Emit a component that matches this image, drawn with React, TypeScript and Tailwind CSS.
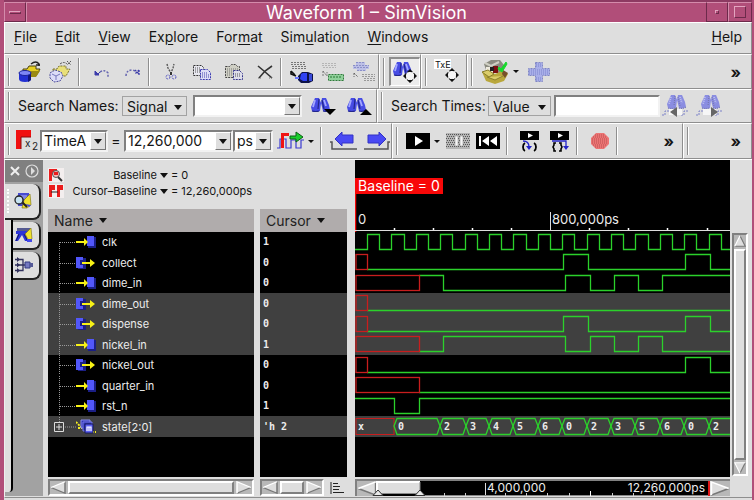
import type { ReactNode } from 'react';
import clsx from 'clsx';

type IconProps = { className?: string };

const MENUS: [string, string, string][] = [
  ['', 'F', 'ile'],
  ['', 'E', 'dit'],
  ['', 'V', 'iew'],
  ['Ex', 'p', 'lore'],
  ['For', 'm', 'at'],
  ['Sim', 'u', 'lation'],
  ['', 'W', 'indows'],
];

type Signal = {
  name: string;
  value: string;
  dir: 'in' | 'out' | 'bus';
  selected?: boolean;
  // x position up to which the value is unknown
  unknown?: number;
  start: 0 | 1;
  edges: number[];
};

const CLOCK_EDGES = Array.from({ length: 30 }, (_, i) => Math.round(12 + i * 12.2));
const STATE_EDGES = [39, 85, 111, 134, 158, 183, 207, 232, 256, 280, 305, 329, 354, 380];
const STATE_VALUES = ['0', '2', '3', '4', '5', '6', '0', '2', '3', '5', '6', '0', '2'];

const SIGNALS: Signal[] = [
  { name: 'clk', value: '1', dir: 'in', start: 0, edges: CLOCK_EDGES },
  { name: 'collect', value: '0', dir: 'out', unknown: 12, start: 0, edges: [208, 233, 330, 355] },
  { name: 'dime_in', value: '0', dir: 'in', unknown: 64, start: 1, edges: [88, 210, 235, 259, 283, 307] },
  { name: 'dime_out', value: '0', dir: 'out', selected: true, unknown: 12, start: 0, edges: [] },
  { name: 'dispense', value: '0', dir: 'out', selected: true, unknown: 12, start: 0, edges: [208, 233, 330, 355] },
  { name: 'nickel_in', value: '1', dir: 'in', selected: true, unknown: 64, start: 0, edges: [88, 210, 235, 259, 283, 307] },
  { name: 'nickel_out', value: '0', dir: 'out', unknown: 12, start: 0, edges: [330, 355] },
  { name: 'quarter_in', value: '0', dir: 'in', unknown: 64, start: 0, edges: [] },
  { name: 'rst_n', value: '1', dir: 'in', start: 1, edges: [39, 64] },
  { name: 'state[2:0]', value: "'h 2", dir: 'bus', selected: true, start: 0, edges: [] },
];

const Caret = ({ className }: IconProps) => (
  <svg viewBox="0 0 8 5" className={clsx('h-[5px] w-2 shrink-0', className)} aria-hidden="true">
    <path d="M0 0h8L4 5z" fill="#111" />
  </svg>
);

const SmallCaret = () => (
  <svg viewBox="0 0 6 3" className="h-[3px] w-1.5 shrink-0" aria-hidden="true">
    <path d="M0 0h6L3 3z" fill="#111" />
  </svg>
);

const DatabaseIcon = () => (
  <svg viewBox="0 0 24 24" className="size-6">
    <path d="M5 9h4l2-3h7v3h4l-4 7H5z" fill="#e6cf22" stroke="#4a4310" />
    <path d="M8 11h14l-4 6h-5z" fill="#9a8a12" />
    <path d="M13 4q5-4 8 0v2m-3-1h4" fill="none" stroke="#222" strokeWidth="1.4" />
    <path d="M1 13v6q0 3 6 3t6-3v-6z" fill="#2330d2" />
    <path d="M10 13h3v7l-3 2z" fill="#10157a" />
    <ellipse cx="7" cy="13" rx="6" ry="2.5" fill="#7d86f5" stroke="#1b229c" />
  </svg>
);

const ReloadDatabaseIcon = () => (
  <svg viewBox="0 0 24 24" className="size-6">
    <path d="M5 9h4l2-3h7v3h4l-4 7H5z" fill="#e9e07a" stroke="#7a7330" strokeDasharray="2 1" />
    <path d="M12 4q4-3 7 0m0-3l4 4m0-4l-4 4" fill="none" stroke="#555" strokeDasharray="2 1" />
    <path d="M2 13l5-3 6 2 2 4-3 5-6 1-4-4z" fill="#dcdcf8" stroke="#4a4a9a" strokeDasharray="2 1" />
    <path d="M4 14l4 2 4-2m-4 2v4" fill="none" stroke="#7777bb" />
  </svg>
);

const UndoIcon = () => (
  <svg viewBox="0 0 18 18" className="size-[18px]">
    <path d="M3 8v4h4zM6 11l2-2" fill="#3c3caa" stroke="#3c3caa" />
    <path d="M8 9q5-3 8 1v4" fill="none" stroke="#6666b0" strokeWidth="1.5" strokeDasharray="2 1.5" />
  </svg>
);

const RedoIcon = () => (
  <svg viewBox="0 0 18 18" className="size-[18px]">
    <path d="M2 13q0-6 7-6l2 1" fill="none" stroke="#6666b0" strokeWidth="1.5" strokeDasharray="2 1.5" />
    <path d="M11 7l4 4m0-4l-4 4m4-4v5" fill="none" stroke="#3c3caa" strokeWidth="1.3" strokeDasharray="2 1" />
  </svg>
);

const CutIcon = () => (
  <svg viewBox="0 0 18 18" className="size-[18px]">
    <path d="M5 1l1 4 3 5 2-5 1-4" fill="none" stroke="#555" strokeWidth="1.4" strokeDasharray="2 1" />
    <path d="M9 9v3" stroke="#333" strokeWidth="2" />
    <circle cx="6" cy="14" r="2" fill="none" stroke="#5454c0" strokeDasharray="2 1" />
    <circle cx="12" cy="14" r="2" fill="none" stroke="#5454c0" strokeDasharray="2 1" />
  </svg>
);

const CopyIcon = () => (
  <svg viewBox="0 0 20 18" className="h-[18px] w-5">
    <path d="M1.500 2.500h8l2 2v8h-10z" fill="#e8e8f0" stroke="#333" strokeDasharray="2 1" />
    <path d="M3 5h6M3 7h6M3 9h5" stroke="#555" strokeDasharray="1 1" />
    <path d="M8.500 6.500h7l3 3v7h-10z" fill="#dedef6" stroke="#3a3ab0" strokeDasharray="2 1" />
    <path d="M10 10h5M10 12h7M10 14h7" stroke="#4444aa" strokeDasharray="1 1" />
  </svg>
);

const PasteIcon = () => (
  <svg viewBox="0 0 20 18" className="h-[18px] w-5">
    <path d="M1.500 3.500h4l2-2h4l2 2h2v11h-14z" fill="#cfcfc4" stroke="#444" strokeDasharray="2 1" />
    <path d="M3 6h12M3 8h5M3 10h5M3 12h5" stroke="#777" strokeDasharray="1 1" />
    <path d="M9.500 7.500h6l3 3v6h-9z" fill="#dedeea" stroke="#33338a" strokeDasharray="2 1" />
    <path d="M11 11h5M11 13h6" stroke="#555" strokeDasharray="1 1" />
  </svg>
);

const DeleteIcon = () => (
  <svg viewBox="0 0 18 18" className="size-[18px]">
    <path d="M2 3l6 5 8 7M16 3L9 8l-6 7" fill="none" stroke="#333" strokeWidth="1.6" />
    <path d="M2 15h3M13 15h4" stroke="#777" strokeDasharray="1 1" />
  </svg>
);

const SendNetIcon = () => (
  <svg viewBox="0 0 24 24" className="size-6">
    <path d="M1 2.500h15M1 4.500h15M2 6.500h14M2 8.500h14" stroke="#777" strokeDasharray="2 1" />
    <path d="M1 11l4 4M1 11v3l5 2" stroke="#111" strokeWidth="1.600" fill="none" />
    <path d="M8 16l4-4h6l5 2v7l-4 2h-8l-3-3z" fill="#0c1248" />
    <path d="M11 14l2-1h4v8h-4l-3-2z" fill="#2f42f2" />
    <path d="M19 14h3v7h-3z" fill="#3a4ad8" />
    <path d="M5 18h4" stroke="#6a77ff" strokeWidth="2" />
  </svg>
);

const SendGreenIcon = () => (
  <svg viewBox="0 0 24 24" className="size-6">
    <path d="M1 3.500h14M1 5.500h14M2 7.500h13" stroke="#b5b5b5" strokeDasharray="2 1" />
    <path d="M2 11v5M2 11l4 5v-4" stroke="#777" fill="none" strokeDasharray="2 1" />
    <rect x="7.500" y="14.500" width="15" height="6" fill="#8fd09a" stroke="#2f7b3b" strokeDasharray="2 1" />
    <path d="M10 16v3m3-3v3m3-3v3m3-3v3" stroke="#277733" strokeDasharray="2 1" />
  </svg>
);

const SendGridIcon = () => (
  <svg viewBox="0 0 24 24" className="size-6">
    <path d="M4 2h9v3h4v4h-3v2H5V9H1V5h3z" fill="#bcbfe6" />
    <path d="M4 2.500h9M1 5.500h16M2 7.500h14M5 10.500h8" stroke="#8a8fc8" strokeDasharray="2 1" />
    <path d="M2 13v4M2 13l4 4" stroke="#666" fill="none" strokeDasharray="2 1" />
    <path d="M10 14.500h13M10 16.500h13M12 18.500h11M12 20.500h11" stroke="#999" strokeDasharray="2 1" />
  </svg>
);

const Lenses = ({ pale }: { pale?: boolean }) => (
  <g opacity={pale ? 0.55 : 1}>
    <path d="M5 0h4l2 5-1 8q-5 2-8 0l-1-4z" fill="#474ce4" />
    <path d="M12 0h4l3 7 1 5q-4 3-7 1l-2-8z" fill="#474ce4" />
    <path d="M5 2l-2 7M14 2l2 6" stroke="#a4a8ff" strokeWidth="1.800" strokeDasharray={pale ? '1 1' : undefined} />
    <path d="M9 1l-1 10M12 2l2 9M2 13q4 1 7 0M13 13q4 1 7-1" fill="none" stroke="#23278c" strokeWidth="1.200" strokeDasharray={pale ? '1 1' : undefined} />
  </g>
);

const MoveArrows = () => (
  <g>
    <circle cx="7" cy="7" r="4.500" fill="#f6f6f6" stroke="#333" strokeDasharray="1.500 1.500" />
    <path d="M7 0l3 3H4zM7 14l3-3H4zM0 7l3-3v6zM14 7l-3-3v6z" fill="#111" />
  </g>
);

const FindMoveIcon = () => (
  <svg viewBox="0 0 28 26" className="h-[26px] w-7">
    <g transform="translate(1 3)"><Lenses /></g>
    <g transform="translate(12 10)"><MoveArrows /></g>
  </svg>
);

const TextMoveIcon = () => (
  <svg viewBox="0 0 28 26" className="h-[26px] w-7">
    <rect x="1" width="17" height="10" fill="#fff" />
    <text x="2" y="9" fontSize="9" fill="#111">TxE</text>
    <g transform="translate(12 9)"><MoveArrows /></g>
  </svg>
);

const BoxIcon = () => (
  <svg viewBox="0 0 28 26" className="h-[26px] w-7">
    <path d="M3 5l7-4h9l4 5-3 8H6z" fill="#8b8b80" />
    <path d="M4 4l6 3 8-4" stroke="#d0d0c4" strokeWidth="2" fill="none" />
    <path d="M5 8h7v6H5z" fill="#eeeade" />
    <path d="M12 7h5v7h-5z" fill="#7d1010" />
    <path d="M9 8h4v4H9z" fill="#222" />
    <path d="M1 13l7-1 6 3 7-3 6 3-4 7-9 3-9-3z" fill="#b9a73c" />
    <path d="M1 13l6-2 6 4-5 3zM6 18l8 3 8-4" fill="#dbcd6a" stroke="#8a7e2c" />
    <path d="M22 11l5 3-3 5-3-4z" fill="#76502a" />
    <path d="M18 8l2 2 5-7 1 2-5 8-4-3z" fill="#17d82c" stroke="#17d82c" />
  </svg>
);

const PlusIcon = () => (
  <svg viewBox="0 0 24 22" className="h-[22px] w-6">
    <path d="M8.500 1.500h7v6h7v7h-7v6h-7v-6h-7v-7h7z" fill="#a9afe9" stroke="#8087c4" strokeDasharray="2 1" />
    <path d="M2 9h20M2 11h20M2 13h20M9 3h6M9 5h6M9 17h6M9 19h6" stroke="#7d84cc" strokeDasharray="1 1" />
  </svg>
);

const FindIcon = ({ up }: { up?: boolean }) => (
  <svg viewBox="0 0 28 20" className="h-5 w-7">
    <g transform="translate(0 2)"><Lenses /></g>
    {up ? <path d="M14 19h12l-6-6z" fill="#000" /> : <path d="M14 13h12l-6 6z" fill="#000" />}
  </svg>
);

const FindTimeIcon = ({ back }: { back?: boolean }) => (
  <svg viewBox="0 0 28 24" className="h-6 w-7">
    <g transform="translate(4 1)"><Lenses pale /></g>
    <path d="M0 21h3v-4h5M19 21h3v-4h5" stroke="#7b80c8" fill="none" strokeDasharray="2 1" />
    <path d="M7 15h13v6H7z" fill="#f6f6f6" />
    {back ? <path d="M15 13v10l-7-5z" fill="#666" /> : <path d="M15 13v10l7-5z" fill="#666" />}
  </svg>
);

const CursorFlagIcon = () => (
  <svg viewBox="0 0 24 24" className="size-6">
    <path d="M0 1h15v7H5v12H0z" fill="#f01010" />
    <path d="M5 8h10M5 8v12" stroke="#8c0808" />
    <text x="9" y="18" fontSize="10" fill="#222">x</text>
    <text x="16" y="21" fontSize="10" fill="#222">2</text>
  </svg>
);

const NextEdgeIcon = () => (
  <svg viewBox="0 0 28 20" className="h-5 w-7">
    <path d="M0 17h3v-9h6v9h5v-8h5v8h5v-8h3" stroke="#3a3ad0" fill="none" strokeWidth="1.200" />
    <path d="M4 2h8v3H7v12H4z" fill="#ef1313" />
    <path d="M13 5h6V1l7 5-7 5V8h-6z" fill="#19cf2c" stroke="#0b5f14" />
  </svg>
);

const EdgeArrowIcon = ({ back }: { back?: boolean }) => (
  <svg viewBox="0 0 28 22" className="h-[22px] w-7">
    {back ? (
      <>
        <path d="M5 9l7-7v3h11v8H12v3z" fill="#4a4af4" stroke="#3232c4" />
        <path d="M0 12h2v7h25" fill="none" stroke="#555" strokeWidth="1.500" />
      </>
    ) : (
      <>
        <path d="M23 9l-7-7v3H5v8h11v3z" fill="#4a4af4" stroke="#3232c4" />
        <path d="M1 19h24v-7h2" fill="none" stroke="#555" strokeWidth="1.500" />
      </>
    )}
  </svg>
);

const PlayIcon = () => (
  <svg viewBox="0 0 24 16" className="h-4 w-6">
    <rect width="24" height="16" fill="#000" />
    <path d="M9 3l8 5-8 5z" fill="#fff" />
  </svg>
);

const PauseIcon = () => (
  <svg viewBox="0 0 24 16" className="h-4 w-6">
    <rect width="24" height="16" fill="#b5b5b5" />
    <path
      d="M0 1.500h24M0 5.500h24M0 9.500h24M0 13.500h24M1 3.500h23M1 7.500h23M1 11.500h23"
      stroke="#555"
      strokeDasharray="1 1"
    />
    <path d="M9 3h3v10H9zM14 3h3v10h-3z" fill="#f5f5f5" stroke="#888" strokeWidth=".5" />
  </svg>
);

const RewindIcon = () => (
  <svg viewBox="0 0 24 16" className="h-4 w-6">
    <rect width="24" height="16" fill="#000" />
    <path d="M3 3h2v10H3zM13 3v10L6 8zM21 3v10l-7-5z" fill="#fff" />
  </svg>
);

const StepIcon = ({ over }: { over?: boolean }) => (
  <svg viewBox="0 0 20 22" className="h-[22px] w-5">
    <rect width="19" height="9" y="1" fill="#000" />
    <path d="M8 3l5 2.500L8 8z" fill="#fff" />
    {over ? (
      <>
        <path d="M2 11h14v6" fill="none" stroke="#2424c8" strokeWidth="1.300" />
        <path d="M13 16h6l-3 4z" fill="#2424c8" />
        <path d="M6 13H4v2l-1 2 1 2v2h2M9 13h2v2l1 2-1 2v2H9" fill="none" stroke="#000" strokeWidth="1.600" />
      </>
    ) : (
      <>
        <path d="M3 11q6 0 6 6" fill="none" stroke="#2424c8" strokeWidth="1.300" />
        <path d="M6 16h6l-3 4z" fill="#2424c8" />
        <path d="M5 13q-2 1-2 4t2 4M14 13q2 1 2 4t-2 4" fill="none" stroke="#000" strokeWidth="1.800" />
      </>
    )}
  </svg>
);

const StopIcon = () => (
  <svg viewBox="0 0 20 18" className="h-[18px] w-5">
    <path d="M6 1h8l5 5v6l-5 5H6l-5-5V6z" fill="#ec7474" />
    <path d="M5 3h10M3 5h14M2 7h16M2 9h16M2 11h16M3 13h14M5 15h10" stroke="#b85050" strokeDasharray="1 1" />
  </svg>
);

const ExploreTabIcon = ({ find }: { find?: boolean }) => (
  <svg viewBox="0 0 20 18" className="h-[18px] w-5">
    {find ? (
      <>
        <path d="M3 2h13v4H3z" fill="#555a90" />
        <path d="M2 5h13v3h-3l2 7h-3L8 9 4 15H1l3-7H2z" fill="#2c34d8" />
        <path d="M5 8l-3 7M10 8l3 6" stroke="#14186c" />
        <path d="M11 8l6-6 1 11-3 2z" fill="#efe230" stroke="#756b08" strokeWidth=".6" />
        <path d="M13 13h5v3h-5z" fill="#4448e8" />
      </>
    ) : (
      <>
        <path d="M5 1h11v13H5z" fill="#474bd0" />
        <path d="M7 4h7M7 6h7" stroke="#bbbdf8" />
        <path d="M11 8l6-6 1 11-4 3h-5z" fill="#efe230" stroke="#756b08" strokeWidth=".6" />
        <path d="M12 12l4 3 2-2" fill="#4448e8" />
        <path d="M9 10l5 5" stroke="#222" strokeWidth="2" />
        <circle cx="6" cy="8" r="4" fill="#c6e3f2" stroke="#222" strokeWidth="1.300" />
      </>
    )}
  </svg>
);

const NetTabIcon = () => (
  <svg viewBox="0 0 20 18" className="h-[18px] w-5">
    <path d="M1 3.500h8v11H1M1 9h10" fill="none" stroke="#30305c" strokeWidth="1.300" />
    <path d="M3 1l3 2.500L3 6zM3 6.500L6 9l-3 2.500zM3 12l3 2.500L3 17z" fill="#30305c" />
    <path d="M11 6h5v6h-5z" fill="#7478c0" stroke="#333a80" />
    <path d="M16 7h3v4h-3z" fill="#555a98" />
  </svg>
);

const BaselineIcon = ({ zoom }: { zoom?: boolean }) => (
  <svg viewBox="0 0 16 14" className="h-3.5 w-4 shrink-0 bg-[#f3eeee]">
    {zoom ? (
      <>
        <path d="M1 1h8v5H4v7H1z" fill="#ea1c1c" />
        <circle cx="8" cy="6" r="3.500" fill="#f3b9b9" stroke="#555" />
        <path d="M6 4h4v3H6z" fill="#ea1c1c" />
        <path d="M10 9l4 4" stroke="#333" strokeWidth="2" />
      </>
    ) : (
      <>
        <path d="M1 1h6v5H4v7H1zM9 1h6v5h-3v7H9z" fill="#ea1c1c" />
        <path d="M3 8h7" stroke="#222" fill="none" />
      </>
    )}
  </svg>
);

const PortIcon = ({ dir }: { dir: Signal['dir'] }) => {
  if (dir === 'bus') {
    return (
      <svg viewBox="0 0 22 16" className="h-4 w-[22px]">
        <path d="M0 3l6 6M2 9h4M16 13h4" stroke="#f5ee20" strokeWidth="1.800" strokeDasharray="2 1" />
        <path d="M5 1h9v8H5z" fill="#3437b4" stroke="#8c90f0" />
        <path d="M7 3h9v9H7z" fill="#2a2ea8" stroke="#777bea" />
        <path d="M9 5h8v9H9z" fill="#5c60f2" stroke="#14185c" />
        <path d="M11 12V8h4v4M13 8v4" fill="none" stroke="#fff" strokeWidth="1.200" />
      </svg>
    );
  }
  if (dir === 'in') {
    return (
      <svg viewBox="0 0 22 16" className="h-4 w-[22px]">
        <path d="M12 3h8v11h-8z" fill="#1b1f86" />
        <path d="M11 2h7v10h-7z" fill="#5257fa" />
        <path d="M0 7h8V4l4 4-4 4V9H0z" fill="#f8f216" />
      </svg>
    );
  }
  return (
    <svg viewBox="0 0 22 16" className="h-4 w-[22px]">
      <path d="M2 3h8v11H2z" fill="#1b1f86" />
      <path d="M0 2h7v3H4v5h3v3H0z" fill="#5257fa" />
      <path d="M6 7h8V4l5 4-5 4V9H6z" fill="#f8f216" />
    </svg>
  );
};

const IconButton = ({ label, className, children }: { label: string; className?: string; children: ReactNode }) => (
  <button type="button" aria-label={label} className={clsx('flex shrink-0 items-center justify-center', className)}>
    {children}
  </button>
);

const Toolbar = ({ className, children }: { className?: string; children: ReactNode }) => (
  <div
    role="toolbar"
    className={clsx(
      'flex items-center border border-t-white border-r-[#8e8e8e] border-b-[#8e8e8e] border-l-white',
      className,
    )}
  >
    <span className="ml-[3px] h-7 w-0.5 shrink-0 border-l border-[#8e8e8e] bg-white" />
    {children}
  </div>
);

const Separator = ({ className }: IconProps) => (
  <span className={clsx('h-7 w-0.5 shrink-0 border-l border-[#8e8e8e] bg-white', className)} />
);

const More = ({ className }: IconProps) => (
  <button type="button" aria-label="More tools" className={clsx('text-base leading-5 font-bold', className)}>
    »
  </button>
);

const DropButton = ({ label }: { label: string }) => (
  <button
    type="button"
    aria-label={label}
    className="flex w-4 shrink-0 items-center justify-center border border-t-white border-r-[#777] border-b-[#777] border-l-white bg-[#dedede]"
  >
    <Caret />
  </button>
);

const Combo = ({ label, value, className }: { label: string; value: string; className?: string }) => (
  <div
    className={clsx(
      'flex h-[22px] shrink-0 border-2 border-t-[#808080] border-r-[#f2f2f2] border-b-[#f2f2f2] border-l-[#808080] bg-white',
      className,
    )}
  >
    <input aria-label={label} defaultValue={value} className="w-full min-w-0 bg-white pl-0.5 text-sm outline-none" />
    <DropButton label={`${label} options`} />
  </div>
);

const OptionSelect = ({ id, value, className }: { id: string; value: string; className?: string }) => (
  <div className={clsx('grid h-5 shrink-0 items-center border border-[#a2a2a2]', className)}>
    <select id={id} className="col-start-1 row-start-1 w-full appearance-none pl-1 text-sm outline-none">
      <option>{value}</option>
    </select>
    <Caret className="pointer-events-none col-start-1 row-start-1 mr-1 justify-self-end" />
  </div>
);

const TitleBar = () => (
  <header className="flex h-[22px] items-stretch border-t-2 border-[#8d3a62] bg-[#b14e79] text-white">
    <button
      type="button"
      aria-label="Window menu"
      className="flex w-[22px] items-center justify-center border border-t-[#d48bab] border-r-[#6d2a4b] border-b-[#6d2a4b] border-l-[#d48bab]"
    >
      <span className="h-[3px] w-3 border border-t-[#e3a5c0] border-r-[#6d2a4b] border-b-[#6d2a4b] border-l-[#e3a5c0]" />
    </button>
    <h1 className="flex flex-1 items-center justify-center border-t border-l border-[#d48bab] text-lg leading-5">
      Waveform 1 – SimVision
    </h1>
    <button
      type="button"
      aria-label="Minimize"
      className="flex w-[22px] items-center justify-center border border-t-[#d48bab] border-r-[#6d2a4b] border-b-[#6d2a4b] border-l-[#6d2a4b]"
    >
      <span className="size-1 border border-t-[#e3a5c0] border-r-[#6d2a4b] border-b-[#6d2a4b] border-l-[#e3a5c0]" />
    </button>
    <button
      type="button"
      aria-label="Maximize"
      className="flex w-6 items-center justify-center border border-t-[#d48bab] border-r-[#6d2a4b] border-b-[#6d2a4b] border-l-[#d48bab]"
    >
      <span className="size-3 border border-t-[#e3a5c0] border-r-[#6d2a4b] border-b-[#6d2a4b] border-l-[#e3a5c0]" />
    </button>
  </header>
);

const MenuBar = () => (
  <nav className="flex h-8 items-center gap-[18px] border border-t-white border-r-[#8e8e8e] border-b-[#8e8e8e] border-l-white px-[9px] pb-0.5 text-sm">
    {MENUS.map(([before, key, after]) => (
      <button type="button" key={key}>
        {before}
        <span className="underline underline-offset-2">{key}</span>
        {after}
      </button>
    ))}
    <button type="button" className="ml-auto">
      <span className="underline underline-offset-2">H</span>elp
    </button>
  </nav>
);

const MainTools = () => (
  <div className="flex h-[35px]">
    <Toolbar className="w-[375px] shrink-0">
      <div className="ml-2 flex gap-1.5">
        <IconButton label="Open database"><DatabaseIcon /></IconButton>
        <IconButton label="Reload database"><ReloadDatabaseIcon /></IconButton>
      </div>
      <Separator className="ml-1.5" />
      <div className="ml-3 flex gap-3.5">
        <IconButton label="Undo"><UndoIcon /></IconButton>
        <IconButton label="Redo"><RedoIcon /></IconButton>
      </div>
      <Separator className="ml-1.5" />
      <div className="ml-3 flex gap-3">
        <IconButton label="Cut"><CutIcon /></IconButton>
        <IconButton label="Copy"><CopyIcon /></IconButton>
        <IconButton label="Paste"><PasteIcon /></IconButton>
        <IconButton label="Delete"><DeleteIcon /></IconButton>
      </div>
      <Separator className="ml-1.5" />
      <div className="ml-2 flex gap-[7px]">
        <IconButton label="Send to schematic"><SendNetIcon /></IconButton>
        <IconButton label="Send to register"><SendGreenIcon /></IconButton>
        <IconButton label="Send to browser"><SendGridIcon /></IconButton>
      </div>
    </Toolbar>
    <Toolbar className="w-[42px] shrink-0">
      <IconButton
        label="Find and move"
        className="ml-1 border-t-2 border-r border-b border-l-2 border-t-[#8e8e8e] border-r-white border-b-white border-l-[#8e8e8e] bg-[#ececec]"
      >
        <FindMoveIcon />
      </IconButton>
    </Toolbar>
    <Toolbar className="w-[46px] shrink-0">
      <IconButton label="Text search" className="ml-1.5"><TextMoveIcon /></IconButton>
    </Toolbar>
    <Toolbar className="flex-1">
      <IconButton label="Packages" className="ml-2 gap-1">
        <BoxIcon />
        <SmallCaret />
      </IconButton>
      <IconButton label="Add" className="ml-2"><PlusIcon /></IconButton>
      <More className="mr-2.5 ml-auto" />
    </Toolbar>
  </div>
);

const SearchTools = () => (
  <div className="flex h-[34px]">
    <Toolbar className="w-[373px] shrink-0">
      <label htmlFor="search-names" className="ml-2 w-[104px] shrink-0 text-sm">Search Names:</label>
      <OptionSelect id="search-names" value="Signal" className="w-[65px]" />
      <Combo label="Name" value="" className="ml-1.5 w-[109px]" />
      <div className="ml-2 flex gap-2">
        <IconButton label="Find next"><FindIcon /></IconButton>
        <IconButton label="Find previous"><FindIcon up /></IconButton>
      </div>
    </Toolbar>
    <Toolbar className="flex-1">
      <label htmlFor="search-times" className="ml-2 w-[97px] shrink-0 text-sm">Search Times:</label>
      <OptionSelect id="search-times" value="Value" className="w-[63px]" />
      <input
        aria-label="Time value"
        className="ml-[3px] h-[22px] w-[106px] border-2 border-t-[#808080] border-r-[#f2f2f2] border-b-[#f2f2f2] border-l-[#808080] bg-white px-1 text-sm outline-none"
      />
      <div className="ml-0.5 flex gap-1.5">
        <IconButton label="Previous time"><FindTimeIcon back /></IconButton>
        <IconButton label="Next time"><FindTimeIcon /></IconButton>
      </div>
    </Toolbar>
  </div>
);

const TimeTools = () => (
  <div className="flex h-9">
    <Toolbar className="w-[388px] shrink-0">
      <span className="ml-1.5 shrink-0"><CursorFlagIcon /></span>
      <Combo label="Cursor" value="TimeA" className="w-[68px]" />
      <span className="w-4 shrink-0 text-center text-sm">=</span>
      <Combo label="Time" value="12,260,000" className="w-[109px]" />
      <Combo label="Unit" value="ps" className="w-10" />
      <IconButton label="Next edge type" className="ml-1 gap-[3px]">
        <NextEdgeIcon />
        <SmallCaret />
      </IconButton>
      <Separator className="ml-1.5" />
      <div className="ml-2 flex gap-[5px]">
        <IconButton label="Previous edge"><EdgeArrowIcon back /></IconButton>
        <IconButton label="Next edge"><EdgeArrowIcon /></IconButton>
      </div>
    </Toolbar>
    <Toolbar className="w-[291px] shrink-0">
      <IconButton label="Run" className="ml-2 gap-1">
        <PlayIcon />
        <SmallCaret />
      </IconButton>
      <IconButton label="Pause" className="ml-1.5"><PauseIcon /></IconButton>
      <IconButton label="Rewind" className="ml-1.5"><RewindIcon /></IconButton>
      <Separator className="ml-1.5" />
      <div className="ml-3 flex gap-2.5">
        <IconButton label="Step into"><StepIcon /></IconButton>
        <IconButton label="Step over"><StepIcon over /></IconButton>
      </div>
      <Separator className="ml-1.5" />
      <IconButton label="Stop" className="ml-3"><StopIcon /></IconButton>
      <Separator className="ml-1.5" />
      <More className="mr-2 ml-auto" />
    </Toolbar>
    <Toolbar className="flex-1">
      <More className="mr-2.5 ml-auto" />
    </Toolbar>
  </div>
);

const Dock = () => (
  <aside className="flex w-[38px] shrink-0 flex-col bg-[#a2a2a2]">
    <div className="flex h-[22px] items-center justify-between bg-[#808080] px-1">
      <button type="button" aria-label="Close panel">
        <svg viewBox="0 0 12 12" className="size-3"><path d="M2 2l8 8M10 2l-8 8" stroke="#eee" strokeWidth="2" /></svg>
      </button>
      <button type="button" aria-label="Expand panel">
        <svg viewBox="0 0 14 14" className="size-3.5">
          <circle cx="7" cy="7" r="6" fill="none" stroke="#ddd" strokeWidth="1.200" />
          <path d="M6 3v8l4-4z" fill="#ddd" />
        </svg>
      </button>
    </div>
    <div className="flex flex-1 pt-0.5 pb-1">
      <div className="w-2 shrink-0 rounded-br border-r-2 border-black bg-[#dedede]" />
      <div className="flex flex-col gap-0.5">
        <button
          type="button"
          aria-label="Design browser"
          className="-ml-2 flex h-9 w-9 items-center gap-1 rounded-r-lg border-r-2 border-b-2 border-[#222] bg-[#dedede] pl-0.5"
        >
          <span className="h-6 border-l-2 border-dotted border-white" />
          <ExploreTabIcon />
        </button>
        <button
          type="button"
          aria-label="Design search"
          className="flex h-7 w-7 items-center rounded-r-lg border-r-2 border-b-2 border-[#222] bg-[#dedede] pl-px"
        >
          <ExploreTabIcon find />
        </button>
        <button
          type="button"
          aria-label="Signal flow"
          className="flex h-7 w-7 items-center rounded-r-lg border-r-2 border-b-2 border-[#222] bg-[#dedede] pl-px"
        >
          <NetTabIcon />
        </button>
      </div>
    </div>
  </aside>
);

const ScrollBox = ({ label, dir, className }: { label: string; dir: 'left' | 'right' | 'up' | 'down'; className?: string }) => {
  const paths = {
    left: ['M15 1v14L1 8z', 'M15 1L1 8', 'M15 1v14L1 8'],
    right: ['M1 1v14l14-7z', 'M1 15V1l14 7', 'M1 15l14-7'],
    up: ['M8 1l7 14H1z', 'M1 15L8 1', 'M8 1l7 14H1'],
    down: ['M1 1h14L8 15z', 'M8 15L1 1h14', 'M15 1L8 15'],
  };
  const [fill, light, dark] = paths[dir];

  return (
    <button type="button" aria-label={label} className={clsx('shrink-0', className)}>
      <svg viewBox="0 0 16 16" preserveAspectRatio="none" className="size-full">
        <path d={fill} fill="#dedede" />
        <path d={dark} fill="none" stroke="#777" strokeWidth="1.500" />
        <path d={light} fill="none" stroke="#fff" strokeWidth="1.500" />
      </svg>
    </button>
  );
};

const HScroll = ({ className, label }: { className?: string; label: string }) => (
  <div className={clsx('flex h-[17px] border-2 border-t-[#808080] border-r-white border-b-white border-l-[#808080] bg-[#b8b8b8]', className)}>
    <ScrollBox label={`${label} left`} dir="left" className="w-4" />
    <div className="mx-0.5 flex-1 border-2 border-t-white border-r-[#808080] border-b-[#808080] border-l-white bg-[#dedede]" />
    <ScrollBox label={`${label} right`} dir="right" className="w-4" />
  </div>
);

const NamePanel = () => (
  <section className="flex w-[206px] shrink-0 flex-col">
    <div className="flex h-[49px] flex-col justify-start gap-0.5 pt-2 text-[11px] leading-3.5 whitespace-nowrap">
      <div className="flex items-center gap-[3px]">
        <BaselineIcon zoom />
        <span className="w-[90px] text-right">Baseline</span>
        <Caret />
        <span>= 0</span>
      </div>
      <div className="flex items-center gap-[3px]">
        <BaselineIcon />
        <span className="w-[90px] text-right">Cursor–Baseline</span>
        <Caret />
        <span>= 12,260,000ps</span>
      </div>
    </div>
    <div className="flex-1 bg-black">
      <table className="w-full border-collapse text-[11px] leading-4 text-[#ececec]">
        <thead>
          <tr className="h-[23px] bg-[#b0acac] text-left text-sm text-[#222]">
            <th className="p-0 pl-1.5 font-normal">
              <button type="button" className="flex items-center gap-1.5">Name <Caret /></button>
            </th>
          </tr>
        </thead>
        <tbody>
          {SIGNALS.map((signal) => (
            <tr key={signal.name} className={clsx('h-5 even:h-[21px]', signal.selected && 'bg-[#404040]')}>
              <td className="p-0">
                <div className="flex h-5 items-center">
                  <svg viewBox="0 0 28 20" className="h-5 w-7 shrink-0" aria-hidden="true">
                    {signal.dir === 'bus' ? (
                      <>
                        <path d="M11.500 0v5M17 10h11" stroke="#999" strokeDasharray="1 1" />
                        <path d="M6.500 5.500h9v9h-9zM8 10h6M11 7v6" fill="none" stroke="#ddd" />
                      </>
                    ) : (
                      <path
                        d={signal.name === 'clk' ? 'M11.500 10v10M12 10.500h16' : 'M11.500 0v20M12 10.500h16'}
                        fill="none"
                        stroke="#999"
                        strokeDasharray="1 1"
                      />
                    )}
                  </svg>
                  <PortIcon dir={signal.dir} />
                  <span className="ml-1">{signal.name}</span>
                </div>
              </td>
            </tr>
          ))}
        </tbody>
      </table>
    </div>
    <HScroll label="Scroll names" className="mt-0.5" />
  </section>
);

const CursorPanel = () => (
  <section className="flex w-[87px] shrink-0 flex-col pt-[49px]">
    <div className="flex-1 bg-black">
      <table className="w-full border-collapse text-[#ececec]">
        <thead>
          <tr className="h-[23px] bg-[#b0acac] text-left text-sm text-[#222]">
            <th className="p-0 pl-1.5 font-normal">
              <button type="button" className="flex items-center gap-1.5">Cursor <Caret /></button>
            </th>
          </tr>
        </thead>
        <tbody className="font-['DejaVu_Sans_Mono',monospace] text-[10px] leading-4 font-bold">
          {SIGNALS.map((signal) => (
            <tr key={signal.name} className={clsx('h-5 even:h-[21px]', signal.selected && 'bg-[#404040]')}>
              <td className="p-0 pl-[3px]">{signal.value}</td>
            </tr>
          ))}
        </tbody>
      </table>
    </div>
    <div className="mt-0.5 flex items-center gap-1.5">
      <HScroll label="Scroll values" className="w-16" />
      <button type="button" aria-label="Align values">
        <svg viewBox="0 0 14 12" className="h-3 w-3.5">
          <path d="M1 0v12M3 1.500h5M3 4.500h7M3 7.500h6M3 10.500h11" stroke="#222" />
        </svg>
      </button>
    </div>
  </section>
);

const rowTop = (row: number) => row * 20 + Math.floor(row / 2);

const tracePath = (signal: Signal, top: number) => {
  const high = top + 2.5;
  const low = top + 17.5;
  let level = signal.start;
  let d = `M${signal.unknown ?? 0} ${level ? high : low}`;
  for (const x of signal.edges) {
    level = level ? 0 : 1;
    d += `H${x + 0.5}V${level ? high : low}`;
  }
  return `${d}H2000`;
};

const StateTrace = ({ top }: { top: number }) => (
  <g>
    <rect x="1" y={top + 2.5} width="38" height="16" fill="none" stroke="#c81e1e" />
    <text x="3" y={top + 14} fontSize="10" fill="#ececec">x</text>
    {STATE_VALUES.map((value, i) => {
      const x = STATE_EDGES[i];
      const end = STATE_EDGES[i + 1];
      return (
        <g key={x}>
          <path
            d={`M${x} ${top + 10}L${x + 3} ${top + 2.5}H${end - 3}L${end} ${top + 10}L${end - 3} ${top + 18.5}H${x + 3}Z`}
            fill="none"
            stroke="#2bd12b"
            strokeWidth="1.300"
          />
          <text x={x + 4} y={top + 14} fontSize="10" fill="#ececec">{value}</text>
        </g>
      );
    })}
  </g>
);

const WavePanel = () => (
  <section className="flex min-w-0 flex-1 flex-col">
    <div className="flex flex-1 flex-col bg-black pt-[18px]">
      <div className="flex">
        <span className="h-4 w-[88px] bg-[#f80808] text-center text-sm leading-4 whitespace-nowrap text-white">Baseline = 0</span>
      </div>
      <svg className="h-[38px] w-full" aria-label="Time ruler">
        <path d="M.5 0v38" stroke="#f80808" strokeWidth="1.500" />
        <path d="M0 36.500h2000" stroke="#ddd" />
        <path d="M39.500 34v2M78.500 34v2M117.500 34v2M156.500 34v2M234.500 34v2M273.500 34v2M312.500 34v2M352.500 34v2" stroke="#fff" strokeWidth="1.500" />
        <path d="M195.500 18v18" stroke="#ddd" />
        <text x="3" y="30" fontSize="13" fill="#ececec">0</text>
        <text x="197" y="30" fontSize="13" fill="#ececec">800,000ps</text>
      </svg>
      <svg className="h-[205px] w-full" aria-label="Waveforms">
        {SIGNALS.map((signal, row) => {
          const top = rowTop(row);
          return (
            <g key={signal.name}>
              {signal.selected && <rect y={top} width="100%" height={rowTop(row + 1) - top} fill="#404040" />}
              {signal.dir === 'bus' ? (
                <g className="font-['DejaVu_Sans_Mono',monospace] font-bold"><StateTrace top={top} /></g>
              ) : (
                <path d={tracePath(signal, top)} fill="none" stroke="#2bd12b" strokeWidth="1.300" />
              )}
              {signal.unknown && (
                <rect x="1" y={top + 2.5} width={signal.unknown - 0.5} height="15" fill="none" stroke="#c81e1e" strokeWidth="1.300" />
              )}
            </g>
          );
        })}
      </svg>
    </div>
    <div className="mt-0.5 flex h-[17px] border-t-2 border-l-2 border-[#808080] bg-black">
      <ScrollBox label="Scroll back" dir="left" className="w-5 bg-[#b8b8b8]" />
      <svg viewBox="0 0 48 15" className="h-[15px] w-12 shrink-0 overflow-visible" aria-hidden="true">
        <path d="M0 0h43v12H0z" fill="#dedede" />
        <path d="M0 12V1h43" fill="none" stroke="#fff" strokeWidth="2" />
        <path d="M0 12.500h43V1" fill="none" stroke="#888" />
        <path d="M-4 14.500L1 9l5 5.500zM38 14.500L43 9l5 5.500z" fill="#e8e8e8" stroke="#333" />
      </svg>
      <svg className="h-[15px] min-w-0 flex-1" aria-label="Overview ruler">
        <path d="M60.500 2v13" stroke="#ddd" />
        <path d="M0 14.500h2000" stroke="#888" />
        <path d="M19.500 12v3M40.500 12v3M80.500 12v3M101.500 12v3M122.500 12v3M144.500 12v3M187.500 12v3M208.500 12v3M229.500 12v3" stroke="#ccc" />
        <path d="M165.500 10v5" stroke="#fff" />
        <text x="62" y="11" fontSize="12" fill="#ececec">4,000,000</text>
        <text x="100%" dx="-3" y="11" fontSize="12" textAnchor="end" fill="#ececec">12,260,000ps</text>
      </svg>
      <ScrollBox label="Scroll forward" dir="right" className="w-[22px] border-l-2 border-[#e01818] bg-[#b8b8b8]" />
    </div>
  </section>
);

const App = () => (
  <div className="flex min-h-screen flex-col border-r-2 border-l-4 border-[#b14e79] bg-[#dedede] pb-0.5 font-[Inter,sans-serif] text-[#151515]">
    <TitleBar />
    <MenuBar />
    <MainTools />
    <SearchTools />
    <TimeTools />
    <main className="flex flex-1 border-t border-b border-t-white border-b-[#8e8e8e] border-l border-l-[#eee] pb-px">
      <Dock />
      <div className="w-[5px] shrink-0" />
      <NamePanel />
      <div className="w-1.5 shrink-0" />
      <CursorPanel />
      <div className="w-2 shrink-0" />
      <WavePanel />
      <div className="flex w-[22px] shrink-0 flex-col pt-[73px] pr-1 pb-5 pl-0.5">
        <div className="flex flex-1 flex-col border-2 border-t-[#808080] border-r-white border-b-white border-l-[#808080] bg-[#b8b8b8]">
          <ScrollBox label="Scroll up" dir="up" className="h-3 w-full" />
          <div className="my-0.5 flex-1 border-2 border-t-white border-r-[#808080] border-b-[#808080] border-l-white bg-[#dedede]" />
          <ScrollBox label="Scroll down" dir="down" className="h-3 w-full" />
        </div>
      </div>
    </main>
  </div>
);

export default App;
